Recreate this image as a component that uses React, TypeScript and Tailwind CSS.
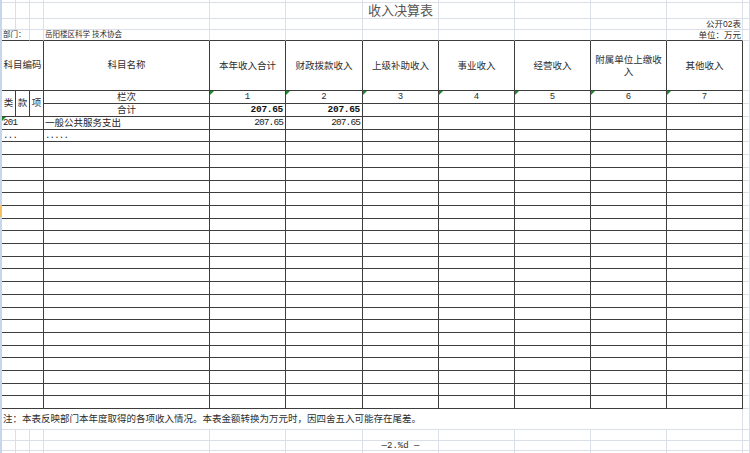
import React from 'react'

const LIGHT = 'border-r border-b border-[#dadfe8]'
const DARK = 'border-r border-b border-[#3d3d3d]'
const TOP_EDGE = 'border-r border-b border-r-[#dadfe8] border-b-[#3d3d3d]'

const CJK = "font-['Liberation_Sans','Noto_Sans_CJK_SC',sans-serif]"
const MONO = "font-['Liberation_Mono','Noto_Sans_CJK_SC',monospace]"

const HEADS = ['本年收入合计', '财政拨款收入', '上级补助收入', '事业收入', '经营收入', '附属单位上缴收入', '其他收入']

// heights of the 21 blank rows below "..."
const BLANK_H = [
  'h-[13px]', 'h-[13px]', 'h-[13px]', 'h-[12px]', 'h-[13px]', 'h-[13px]', 'h-[12px]',
  'h-[13px]', 'h-[13px]', 'h-[12px]', 'h-[13px]', 'h-[13px]', 'h-[13px]', 'h-[12px]',
  'h-[13px]', 'h-[13px]', 'h-[12px]', 'h-[13px]', 'h-[13px]', 'h-[12px]', 'h-[13px]',
]

function Flag() {
  return (
    <span className="absolute left-0 top-0 w-0 h-0 border-t-[4px] border-r-[4px] border-t-[#1b8a2a] border-r-transparent" />
  )
}

function LightRow({ h }: { h: string }) {
  return (
    <>
      {[...Array(12)].map((_, i) => (
        <div key={i} className={`${LIGHT} ${h}`} />
      ))}
    </>
  )
}

function DataRow({ h, code, name, total, fiscal, first, dots }: {
  h: string; code?: string; name?: string; total?: string; fiscal?: string; first?: boolean; dots?: boolean
}) {
  return (
    <>
      <div className={`col-span-3 relative ${DARK} ${h} ${MONO} text-[9px] leading-[12px] pl-[1px] text-[#222] tracking-[-0.6px]`}>
        {first && <Flag />}
        {code}
      </div>
      <div className={`${DARK} ${h} ${dots ? MONO + ' text-[9px] tracking-[-0.8px]' : CJK + ' text-[9.5px]'} leading-[12px] pl-[1px] text-[#222]`}>
        {name}
      </div>
      <div className={`${DARK} ${h} ${MONO} text-[9.5px] leading-[12px] text-right pr-[2px] text-[#222] tracking-[-0.9px]`}>{total}</div>
      <div className={`${DARK} ${h} ${MONO} text-[9.5px] leading-[12px] text-right pr-[2px] text-[#222] tracking-[-0.9px]`}>{fiscal}</div>
      {[...Array(5)].map((_, i) => (
        <div key={i} className={`${DARK} ${h}`} />
      ))}
      <div className={`${LIGHT} ${h}`} />
    </>
  )
}

export default function App() {
  return (
    <div className="w-[750px] h-[453px] bg-white overflow-hidden flex text-[#2e2e2e]">
      <div className="w-[2px] h-full bg-[#c8d6ea] flex flex-col shrink-0">
        <div className="h-[205px]" />
        <div className="h-[12px] bg-[#f6bf63]" />
      </div>

      <div className="grid grid-cols-[14px_14px_14px_166px_76px_77px_76px_76px_76px_76px_76px_7px] content-start">
        {/* top strip */}
        <LightRow h="h-[3px]" />

        {/* title row */}
        {[...Array(6)].map((_, i) => (
          <div key={i} className={`${LIGHT} h-[16px]`} />
        ))}
        <div className={`${LIGHT} h-[16px] ${CJK} text-[13px] leading-[16px] text-center text-[#555] whitespace-nowrap`}>
          收入决算表
        </div>
        {[...Array(5)].map((_, i) => (
          <div key={i} className={`${LIGHT} h-[16px]`} />
        ))}

        {/* 公开02表 */}
        {[...Array(10)].map((_, i) => (
          <div key={i} className={`${LIGHT} h-[11px]`} />
        ))}
        <div className={`${LIGHT} h-[11px] ${CJK} text-[8.5px] leading-[10px] text-right pr-[1px] whitespace-nowrap`}>
          公开02表
        </div>
        <div className={`${LIGHT} h-[11px]`} />

        {/* department / unit */}
        <div className={`col-span-2 ${TOP_EDGE} h-[11px] ${CJK} text-[7.5px] leading-[10px] pl-[1px] whitespace-nowrap`}>
          部门：
        </div>
        <div className={`${TOP_EDGE} h-[11px]`} />
        <div className={`${TOP_EDGE} h-[11px] ${CJK} text-[7.5px] leading-[10px] pl-[1px] whitespace-nowrap`}>
          岳阳楼区科学 技术协会
        </div>
        {[...Array(6)].map((_, i) => (
          <div key={i} className={`${TOP_EDGE} h-[11px]`} />
        ))}
        <div className={`${TOP_EDGE} h-[11px] ${CJK} text-[8.5px] leading-[10px] text-right pr-[1px] whitespace-nowrap`}>
          单位：万元
        </div>
        <div className={`${LIGHT} h-[11px]`} />

        {/* header */}
        <div className={`col-span-3 ${DARK} h-[50px] flex items-center justify-center ${CJK} text-[9.5px] whitespace-nowrap`}>
          科目编码
        </div>
        <div className={`${DARK} h-[50px] flex items-center justify-center ${CJK} text-[9.5px]`}>科目名称</div>
        {HEADS.map(t => (
          <div key={t} className={`${DARK} h-[50px] flex items-center justify-center text-center ${CJK} text-[9.5px] leading-[12px] px-[1px]`}>
            {t}
          </div>
        ))}
        <div className={`${LIGHT} h-[50px]`} />

        {/* 栏次 row */}
        {['类', '款', '项'].map(t => (
          <div key={t} className={`row-span-2 ${DARK} flex items-center justify-center ${CJK} text-[9.5px]`}>{t}</div>
        ))}
        <div className={`${DARK} h-[13px] text-center ${CJK} text-[9.5px] leading-[12px]`}>栏次</div>
        {[1, 2, 3, 4, 5, 6, 7].map(n => (
          <div key={n} className={`relative ${DARK} h-[13px] text-center ${MONO} text-[9px] leading-[12px]`}>
            <Flag />
            {n}
          </div>
        ))}
        <div className={`${LIGHT} h-[13px]`} />

        {/* 合计 row */}
        <div className={`${DARK} h-[13px] text-center ${CJK} text-[9.5px] leading-[12px]`}>合计</div>
        <div className={`${DARK} h-[13px] text-right pr-[2px] ${MONO} font-bold text-[9.5px] leading-[12px] tracking-[-0.3px] text-[#111]`}>207.65</div>
        <div className={`${DARK} h-[13px] text-right pr-[2px] ${MONO} font-bold text-[9.5px] leading-[12px] tracking-[-0.3px] text-[#111]`}>207.65</div>
        {[...Array(5)].map((_, i) => (
          <div key={i} className={`${DARK} h-[13px]`} />
        ))}
        <div className={`${LIGHT} h-[13px]`} />

        <DataRow h="h-[13px]" code="201" name="一般公共服务支出" total="207.65" fiscal="207.65" first />
        <DataRow h="h-[12px]" code="..." name="....." dots />
        {BLANK_H.map((h, i) => (
          <DataRow key={i} h={h} />
        ))}

        {/* note */}
        <div className={`col-span-11 ${LIGHT} h-[21px] flex items-center pl-[1px] ${CJK} text-[9.5px] whitespace-nowrap`}>
          注：本表反映部门本年度取得的各项收入情况。本表金额转换为万元时，因四舍五入可能存在尾差。
        </div>
        <div className={`${LIGHT} h-[21px]`} />

        <LightRow h="h-[11px]" />

        {[...Array(6)].map((_, i) => (
          <div key={i} className={`${LIGHT} h-[10px]`} />
        ))}
        <div className={`${LIGHT} h-[10px] text-center ${MONO} text-[9px] leading-[10px] whitespace-nowrap`}>
          —2.%d —
        </div>
        {[...Array(5)].map((_, i) => (
          <div key={i} className={`${LIGHT} h-[10px]`} />
        ))}

        {[...Array(12)].map((_, i) => (
          <div key={i} className="border-r border-[#dadfe8] h-[2px]" />
        ))}
      </div>
    </div>
  )
}
